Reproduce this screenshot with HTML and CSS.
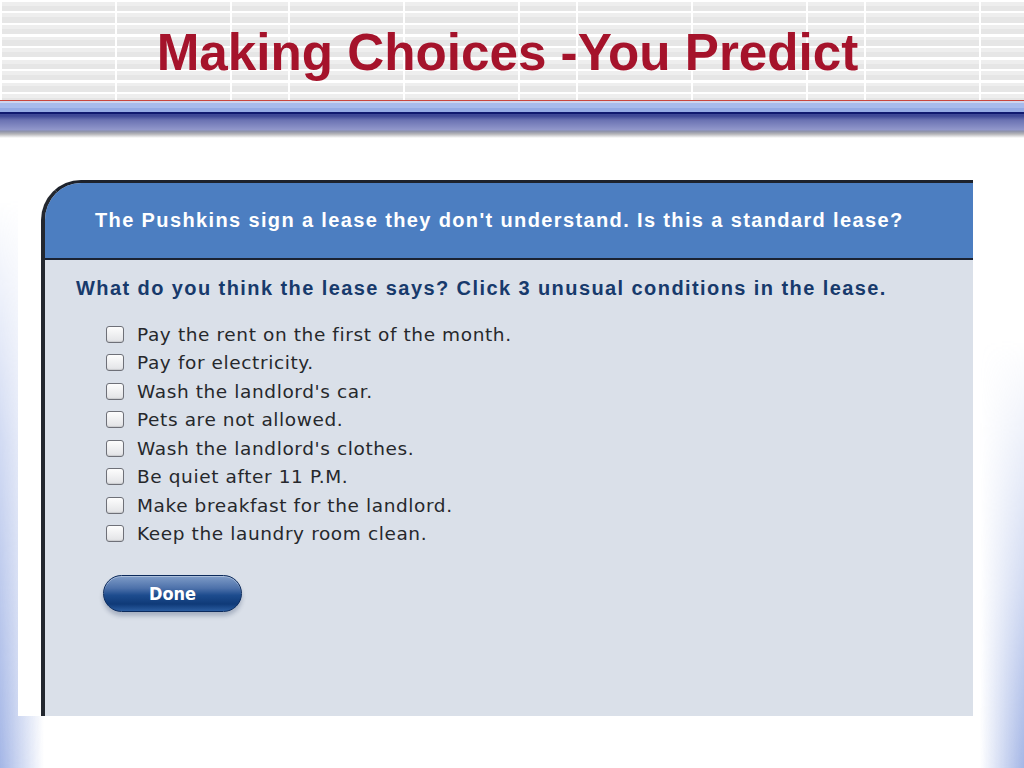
FILE: index.html
```html
<!DOCTYPE html>
<html lang="en">
<head>
  <meta charset="UTF-8">
  <meta name="viewport" content="width=device-width, initial-scale=1.0">
  <title>Making Choices - You Predict</title>
  <link rel="stylesheet" href="styles.css">
</head>
<body>
  <div class="slide">
    <header class="title-bar">
      <h1>Making Choices -You Predict</h1>
    </header>
    <div class="rule"></div>

    <main class="stage">
      <div class="shot">
        <div class="panel">
          <div class="panel-head">The Pushkins sign a lease they don't understand. Is this a standard lease?</div>
          <div class="panel-body">
            <p class="question">What do you think the lease says? Click 3 unusual conditions in the lease.</p>
            <ul class="choices">
              <li><span class="box"></span>Pay the rent on the first of the month.</li>
              <li><span class="box"></span>Pay for electricity.</li>
              <li><span class="box"></span>Wash the landlord's car.</li>
              <li><span class="box"></span>Pets are not allowed.</li>
              <li><span class="box"></span>Wash the landlord's clothes.</li>
              <li><span class="box"></span>Be quiet after 11 P.M.</li>
              <li><span class="box"></span>Make breakfast for the landlord.</li>
              <li><span class="box"></span>Keep the laundry room clean.</li>
            </ul>
            <button class="done">Done</button>
          </div>
        </div>
      </div>
    </main>
  </div>
</body>
</html>
```

FILE: styles.css
```css
body {
  margin: 0;
  background: #fff;
  font-family: 'Liberation Sans', Arial, sans-serif;
}

.slide {
  position: relative;
  width: 1024px;
  height: 768px;
  overflow: hidden;
  background: #fff;
}

/* blue glow down both sides of the slide */
.slide::before,
.slide::after {
  content: '';
  position: absolute;
  top: 140px;
  bottom: 0;
  width: 44px;
}

.slide::before {
  left: 0;
  background: linear-gradient(to right, #a4b6e6, rgba(255, 255, 255, 0));
  -webkit-mask-image: linear-gradient(to bottom, transparent 60px, rgba(0, 0, 0, 0.5) 300px, #000 100%);
  mask-image: linear-gradient(to bottom, transparent 60px, rgba(0, 0, 0, 0.5) 300px, #000 100%);
}

.slide::after {
  right: 0;
  background: linear-gradient(to left, #a4b6e6, rgba(255, 255, 255, 0));
  -webkit-mask-image: linear-gradient(to bottom, transparent 200px, rgba(0, 0, 0, 0.5) 450px, #000 100%);
  mask-image: linear-gradient(to bottom, transparent 200px, rgba(0, 0, 0, 0.5) 450px, #000 100%);
}

.title-bar {
  height: 100px;
  display: flex;
  align-items: center;
  justify-content: center;
  background:
    repeating-linear-gradient(to right, #fff 0 2px, transparent 2px 115px, #fff 115px 117px, transparent 117px 230px, #fff 230px 232px, transparent 232px 288px),
    repeating-linear-gradient(to bottom, #fff 0 2px, #eeeeee 2px 6px, #e6e6e6 6px 11.5px);
}

.title-bar h1 {
  margin: 4px 0 0 -9px;
  font-size: 51.2px;
  font-weight: bold;
  color: #a5132b;
}

.rule {
  height: 38px;
  background: linear-gradient(to bottom,
    #c9463f 0 1px,
    #cdd5ee 1px 3px,
    #a8bbec 3px 8px,
    #94aae4 8px 12px,
    #101a70 12px 14px,
    #3e4896 14px 16px,
    #6a72b2 20px,
    #9298cb 30px,
    #8a8fa8 31px,
    #b4b4b8 34px,
    #fff 38px);
}

.stage {
  position: relative;
  z-index: 1;
  padding: 40px 0 0 18px;
}

.shot {
  width: 955px;
  height: 538px;
  background: #fff;
  padding-top: 2px;
  box-sizing: border-box;
}

.panel {
  margin-left: 23px;
  height: 100%;
  box-sizing: border-box;
  display: flex;
  flex-direction: column;
  border-top: 3px solid #1d222c;
  border-left: 4px solid #23272f;
  border-top-left-radius: 40px;
  overflow: hidden;
  background: #dae0e9;
}

.panel-head {
  height: 75px;
  flex: none;
  display: flex;
  align-items: center;
  padding: 0 0 0 50px;
  background: #4c7ec1;
  border-bottom: 2px solid #1b2333;
  color: #fff;
  font-size: 20px;
  font-weight: bold;
  letter-spacing: 1.37px;
}

.panel-body {
  flex: 1;
  padding: 17px 0 0 31px;
}

.question {
  margin: 0 0 20px;
  color: #173a6c;
  font-size: 20px;
  font-weight: bold;
  letter-spacing: 1.42px;
}

.choices {
  list-style: none;
  margin: 0;
  padding: 0 0 0 30px;
}

.choices li {
  display: flex;
  align-items: center;
  height: 28.5px;
  font-family: 'DejaVu Sans', Verdana, sans-serif;
  font-size: 18.5px;
  letter-spacing: 0.6px;
  color: #26282c;
}

.box {
  width: 16px;
  height: 15px;
  margin-right: 13px;
  border: 1px solid #6e7078;
  border-radius: 3px;
  background: linear-gradient(to bottom, #fdfdfd, #e2e3e6);
  box-shadow: inset 0 -1px 1px rgba(0, 0, 0, 0.1);
}

.done {
  margin: 27px 0 0 27px;
  width: 139px;
  height: 37px;
  border: 1px solid #0b2a5c;
  border-radius: 19px;
  background: linear-gradient(to bottom, #7f9cc8 0%, #4d71aa 35%, #1d4c8e 55%, #0f3a78 80%, #2a5ca0 100%);
  box-shadow: 0 4px 4px rgba(20, 40, 80, 0.25), inset 0 1px 0 rgba(255, 255, 255, 0.35);
  color: #fff;
  font-family: 'DejaVu Sans Condensed', 'DejaVu Sans', sans-serif;
  font-size: 18px;
  font-weight: bold;
  cursor: pointer;
}
```
